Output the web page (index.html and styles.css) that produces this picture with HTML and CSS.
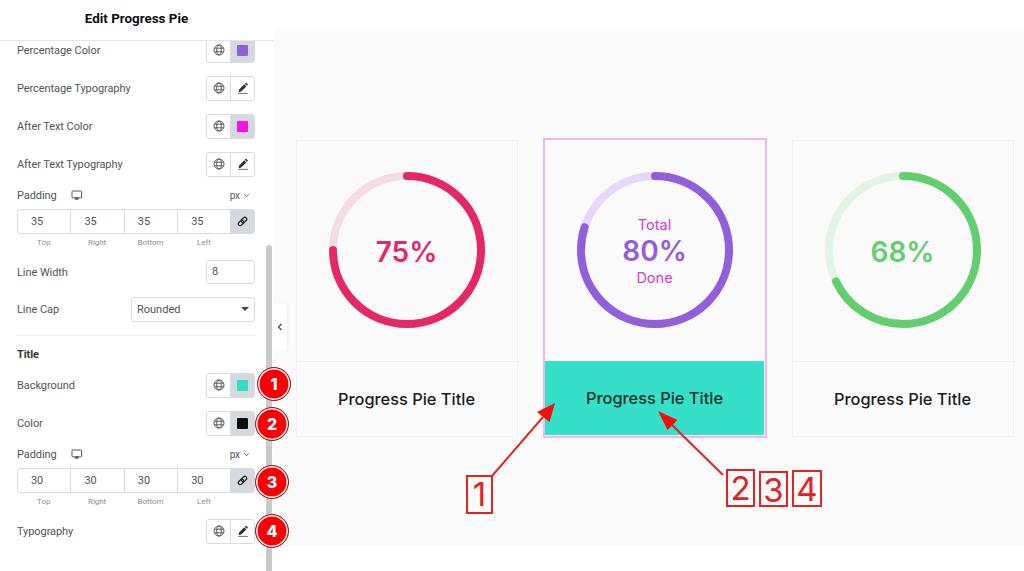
FILE: index.html
```
<!DOCTYPE html>
<html lang="en">
<head>
  <meta charset="UTF-8">
  <meta name="viewport" content="width=device-width, initial-scale=1.0">
  <title>Edit Progress Pie</title>
  <link rel="stylesheet" href="styles.css">
</head>
<body>
  <!-- Shared icons -->
  <svg class="sprite" width="0" height="0">
    <symbol id="globe" viewBox="0 0 12 12">
      <g fill="none" stroke="currentColor" stroke-width="0.9">
        <circle cx="6" cy="6" r="5"/>
        <ellipse cx="6" cy="6" rx="2.3" ry="5"/>
        <path d="M1.4 4.2h9.2M1.4 7.8h9.2"/>
      </g>
    </symbol>
    <symbol id="pencil" viewBox="0 0 12 12">
      <path d="M1.5 10.2l.6-2.8 5.1-5.1 2.1 2.1-5.1 5.1zM7.8 1.7l.8-.8q.4-.4.8 0l1.3 1.3q.4.4 0 .8l-.8.8z" fill="currentColor"/>
      <path d="M1.2 11.4h9.6" stroke="currentColor" stroke-width="0.7"/>
    </symbol>
    <symbol id="desktop" viewBox="0 0 12 11">
      <rect x="1" y="1" width="9.6" height="6.8" rx="0.8" fill="none" stroke="currentColor" stroke-width="1"/>
      <path d="M4.6 7.8h2.4v1.4H4.6zM3.4 9.1h4.8" fill="currentColor" stroke="currentColor" stroke-width="0.6"/>
    </symbol>
    <symbol id="link" viewBox="0 0 12 12">
      <g fill="none" stroke="currentColor" stroke-width="1.4" transform="rotate(-45 6 6)">
        <rect x="0.4" y="4" width="6.6" height="4" rx="2"/>
        <rect x="5" y="4" width="6.6" height="4" rx="2"/>
      </g>
    </symbol>
    <symbol id="chevron" viewBox="0 0 6 6">
      <path d="M1 2l2 2 2-2" fill="none" stroke="currentColor" stroke-width="0.8"/>
    </symbol>
  </svg>

  <div class="editor">
    <aside class="panel">
      <header class="panel-header">Edit Progress Pie</header>
      <div class="panel-body">
        <div class="controls">
          <div class="row">
            <span>Percentage Color</span>
            <div class="pair">
              <button><svg class="icon"><use href="#globe"/></svg></button>
              <button class="filled"><i class="swatch purple"></i></button>
            </div>
          </div>
          <div class="row">
            <span>Percentage Typography</span>
            <div class="pair">
              <button><svg class="icon"><use href="#globe"/></svg></button>
              <button><svg class="icon pencil"><use href="#pencil"/></svg></button>
            </div>
          </div>
          <div class="row">
            <span>After Text Color</span>
            <div class="pair">
              <button><svg class="icon"><use href="#globe"/></svg></button>
              <button class="filled"><i class="swatch magenta"></i></button>
            </div>
          </div>
          <div class="row">
            <span>After Text Typography</span>
            <div class="pair">
              <button><svg class="icon"><use href="#globe"/></svg></button>
              <button><svg class="icon pencil"><use href="#pencil"/></svg></button>
            </div>
          </div>

          <div class="dimensions">
            <div class="dimensions-head">
              <span>Padding</span>
              <svg class="desktop"><use href="#desktop"/></svg>
              <span class="unit">px <svg class="chevron"><use href="#chevron"/></svg></span>
            </div>
            <div class="inputs">
              <div>35</div><div>35</div><div>35</div><div>35</div>
              <button><svg class="icon"><use href="#link"/></svg></button>
            </div>
            <div class="sides"><span>Top</span><span>Right</span><span>Bottom</span><span>Left</span></div>
          </div>

          <div class="row">
            <span>Line Width</span>
            <div class="number">8</div>
          </div>
          <div class="row line-cap">
            <span>Line Cap</span>
            <div class="select">Rounded</div>
          </div>

          <h2>Title</h2>
          <div class="row">
            <span>Background</span>
            <div class="pair">
              <button><svg class="icon"><use href="#globe"/></svg></button>
              <button class="filled"><i class="swatch teal"></i></button>
            </div>
          </div>
          <div class="row">
            <span>Color</span>
            <div class="pair">
              <button><svg class="icon"><use href="#globe"/></svg></button>
              <button class="filled"><i class="swatch black"></i></button>
            </div>
          </div>
          <div class="dimensions">
            <div class="dimensions-head">
              <span>Padding</span>
              <svg class="desktop"><use href="#desktop"/></svg>
              <span class="unit">px <svg class="chevron"><use href="#chevron"/></svg></span>
            </div>
            <div class="inputs">
              <div>30</div><div>30</div><div>30</div><div>30</div>
              <button><svg class="icon"><use href="#link"/></svg></button>
            </div>
            <div class="sides"><span>Top</span><span>Right</span><span>Bottom</span><span>Left</span></div>
          </div>
          <div class="row">
            <span>Typography</span>
            <div class="pair">
              <button><svg class="icon"><use href="#globe"/></svg></button>
              <button><svg class="icon pencil"><use href="#pencil"/></svg></button>
            </div>
          </div>
        </div>
        <div class="scrollbar"></div>
      </div>
    </aside>

    <main class="preview">
      <button class="collapse"><svg width="6" height="8" viewBox="0 0 6 8"><path d="M4.5 1L1.5 4l3 3" fill="none" stroke="#444" stroke-width="1.2"/></svg></button>
      <section class="card red">
        <div class="pie">
          <svg width="156" height="156" viewBox="0 0 156 156">
            <circle class="track" cx="78" cy="78" r="74"/>
            <circle class="bar" cx="78" cy="78" r="74" pathLength="100" stroke-dasharray="75 100"/>
          </svg>
          <div class="label"><strong>75%</strong></div>
        </div>
        <div class="title">Progress Pie Title</div>
      </section>
      <section class="card violet selected">
        <div class="pie">
          <svg width="156" height="156" viewBox="0 0 156 156">
            <circle class="track" cx="78" cy="78" r="74"/>
            <circle class="bar" cx="78" cy="78" r="74" pathLength="100" stroke-dasharray="80 100"/>
          </svg>
          <div class="label"><span>Total</span><strong>80%</strong><span>Done</span></div>
        </div>
        <div class="title">Progress Pie Title</div>
      </section>
      <section class="card green">
        <div class="pie">
          <svg width="156" height="156" viewBox="0 0 156 156">
            <circle class="track" cx="78" cy="78" r="74"/>
            <circle class="bar" cx="78" cy="78" r="74" pathLength="100" stroke-dasharray="68 100"/>
          </svg>
          <div class="label"><strong>68%</strong></div>
        </div>
        <div class="title">Progress Pie Title</div>
      </section>
    </main>
  </div>

  <!-- Callouts over the editor -->
  <div class="badge badge-1">1</div>
  <div class="badge badge-2">2</div>
  <div class="badge badge-3">3</div>
  <div class="badge badge-4">4</div>

  <svg class="arrows" width="1024" height="571">
    <path d="M492 476L543 417M723 475L672 425" stroke="#e02424" stroke-width="2"/>
    <path d="M555 403L549.5 422L537 412zM658 411L677.5 420L667.5 430z" fill="#fb0d0d"/>
  </svg>
  <div class="mark mark-1">1</div>
  <div class="mark mark-2">2</div>
  <div class="mark mark-3">3</div>
  <div class="mark mark-4">4</div>
</body>
</html>
```
FILE: styles.css
```
* {
  box-sizing: border-box;
}

body {
  margin: 0;
  height: 571px;
  overflow: hidden;
  background: #fff;
  font-family: Roboto, "Liberation Sans", sans-serif;
  font-size: 11px;
  color: #515458;
}

button {
  margin: 0;
  padding: 0;
  border: none;
  background: none;
  color: inherit;
  font: inherit;
}

.sprite {
  display: none;
}

.editor {
  display: flex;
  height: 571px;
}

/* Side panel */
.panel {
  width: 273px;
  height: 571px;
  display: flex;
  flex-direction: column;
}

.panel-header {
  height: 41px;
  padding-top: 1px;
  padding-bottom: 4px;
  display: flex;
  align-items: center;
  justify-content: center;
  border-bottom: 1px solid #e4e5e7;
  font-size: 13.4px;
  font-weight: 700;
  color: #0c0d0e;
}

.panel-body {
  flex: 1;
  display: flex;
  overflow: hidden;
}

.controls {
  width: 255px;
  padding-left: 17px;
  margin-top: -10px;
  letter-spacing: -0.07px;
}

.scrollbar {
  width: 6px;
  height: 400px;
  margin: 204px 0 0 11px;
  border-radius: 3px;
  background: #c9cacb;
}

.row {
  height: 38px;
  display: flex;
  align-items: center;
  justify-content: space-between;
}

.pair {
  width: 49px;
  height: 25px;
  display: flex;
  border: 1px solid #d9dbde;
  border-radius: 3px;
  overflow: hidden;
}

.pair button {
  width: 24px;
  display: flex;
  align-items: center;
  justify-content: center;
}

.pair button + button {
  width: 23px;
  box-shadow: -1px 0 #d9dbde;
}

.pair .filled {
  background: #d5d8dc;
}

.icon {
  width: 12px;
  height: 12px;
  color: #4a4d51;
}

.pencil {
  color: #303336;
}

.swatch {
  width: 11px;
  height: 11px;
  border-radius: 1px;
}

.purple {
  background: #925fdb;
}

.magenta {
  background: #f312e8;
}

.teal {
  background: #36dcc2;
}

.black {
  background: #0c0d0e;
}

.dimensions {
  height: 70px;
}

.dimensions-head {
  height: 24px;
  display: flex;
  align-items: center;
}

.desktop {
  width: 12px;
  height: 11px;
  margin-left: 14px;
}

.unit {
  display: flex;
  align-items: center;
  gap: 3px;
  margin-left: auto;
  margin-right: 5px;
  font-size: 10px;
}

.chevron {
  width: 7px;
  height: 7px;
}

.inputs {
  height: 25px;
  margin-top: 2px;
  display: flex;
  border: 1px solid #d9dbde;
  border-radius: 3px;
  overflow: hidden;
}

.inputs div {
  width: 53.4px;
  padding-left: 13px;
  display: flex;
  align-items: center;
  border-right: 1px solid #d9dbde;
}

.inputs div:nth-child(4) {
  border-right: none;
  width: 52px;
}

.inputs button {
  flex: 1;
  display: flex;
  align-items: center;
  justify-content: center;
  background: #d5d8dc;
}

.inputs .icon {
  width: 11px;
  height: 11px;
  color: #202224;
}

.sides {
  display: flex;
  margin-top: 2px;
  font-size: 8px;
  line-height: 14px;
  color: #8a8e93;
}

.sides span {
  width: 53.4px;
  text-align: center;
}

.number {
  width: 49px;
  height: 24px;
  padding-left: 5px;
  line-height: 22px;
  border: 1px solid #d9dbde;
  border-radius: 3px;
}

.line-cap {
  height: 45px;
  padding-bottom: 8px;
  border-bottom: 1px solid #eceded;
}

.select {
  width: 124px;
  height: 25px;
  padding: 0 5px;
  display: flex;
  align-items: center;
  justify-content: space-between;
  border: 1px solid #d9dbde;
  border-radius: 3px;
  letter-spacing: 0;
}

.select::after {
  content: "";
  border: 4px solid transparent;
  border-top-color: #3f444b;
  border-bottom: none;
}

h2 {
  height: 30px;
  margin: 0;
  padding-top: 12px;
  font-size: 11px;
  line-height: 14px;
  font-weight: 700;
  color: #303336;
}

/* Preview */
.preview {
  position: relative;
  width: 751px;
  height: 519px;
  margin-top: 28px;
  padding: 112px 0 0 23px;
  display: flex;
  align-items: flex-start;
  background: #fafafa;
  font-family: Inter, "Liberation Sans", sans-serif;
}

.collapse {
  position: absolute;
  left: 0;
  top: 276px;
  width: 14px;
  height: 46px;
  display: flex;
  align-items: center;
  justify-content: center;
  border-radius: 0 3px 3px 0;
  background: #fff;
  box-shadow: 1px 0 2px rgba(0, 0, 0, 0.06);
}

.card {
  flex-shrink: 0;
  width: 222px;
  height: 297px;
  margin-right: 26px;
  border: 1px solid #f0f0f1;
}

.card.selected {
  width: 224px;
  height: 300px;
  margin: -2px 25px 0 -1px;
  border: 2px solid #ebb9f0;
}

.pie {
  position: relative;
  height: 221px;
  padding-top: 31px;
  display: flex;
  justify-content: center;
  border-bottom: 1px solid #f0f0f1;
}

.pie svg {
  display: block;
  margin-right: 1px;
}

.pie circle {
  fill: none;
  stroke-width: 8;
}

.bar {
  stroke: currentColor;
  stroke-linecap: round;
  transform: rotate(-90deg);
  transform-origin: 78px 78px;
}

/* Text inside the ring */
.label {
  position: absolute;
  inset: 33px 1px 32px 0;
  display: flex;
  flex-direction: column;
  align-items: center;
  justify-content: center;
}

.label strong {
  font-size: 28px;
  line-height: 30px;
  font-weight: 600;
}

.label span {
  font-size: 14.5px;
  line-height: 23px;
  color: #d63bd8;
}

.red {
  color: #e52768;
}

.red .track {
  stroke: #f3dce5;
}

.violet {
  color: #925fdb;
}

.violet .track {
  stroke: #e7d8fb;
}

.green {
  color: #62ce70;
}

.green .track {
  stroke: #e2f3e7;
}

.title {
  height: 74px;
  padding-right: 1px;
  display: flex;
  align-items: center;
  justify-content: center;
  font-size: 16.4px;
  font-weight: 500;
  color: #1b1c1d;
}

.selected .pie {
  padding-top: 32px;
  border-bottom: none;
}

.selected .label {
  top: 33px;
  bottom: 32px;
}

.selected .title {
  height: 74px;
  margin-right: 1px;
  padding-right: 0;
  background: #36e0c8;
  color: #10302d;
}

/* Callouts */
.badge {
  position: absolute;
  width: 34px;
  height: 34px;
  border: 1px solid #8c2020;
  border-radius: 50%;
  background: #fb0007;
  box-shadow: inset 0 0 0 1.5px #fff;
  color: #fff;
  font-family: Inter, "Liberation Sans", sans-serif;
  font-size: 16px;
  font-weight: 800;
  line-height: 32px;
  text-align: center;
}

.badge-1 {
  left: 257px;
  top: 367px;
}

.badge-2 {
  left: 255px;
  top: 407px;
}

.badge-3 {
  left: 255px;
  top: 465px;
}

.badge-4 {
  left: 255px;
  top: 514px;
}

.arrows {
  position: absolute;
  left: 0;
  top: 0;
}

.mark {
  position: absolute;
  width: 29px;
  height: 37px;
  border: 2px solid #e02424;
  color: #e02424;
  font-family: Inter, "Liberation Sans", sans-serif;
  font-size: 33px;
  line-height: 34px;
  text-align: center;
}

.mark-1 {
  left: 466px;
  top: 475px;
  width: 27px;
  height: 39px;
}

.mark-2 {
  left: 726px;
  top: 469px;
  height: 38px;
}

.mark-3 {
  left: 759px;
  top: 471px;
  height: 36px;
}

.mark-4 {
  left: 792px;
  top: 470px;
  width: 30px;
}
```
